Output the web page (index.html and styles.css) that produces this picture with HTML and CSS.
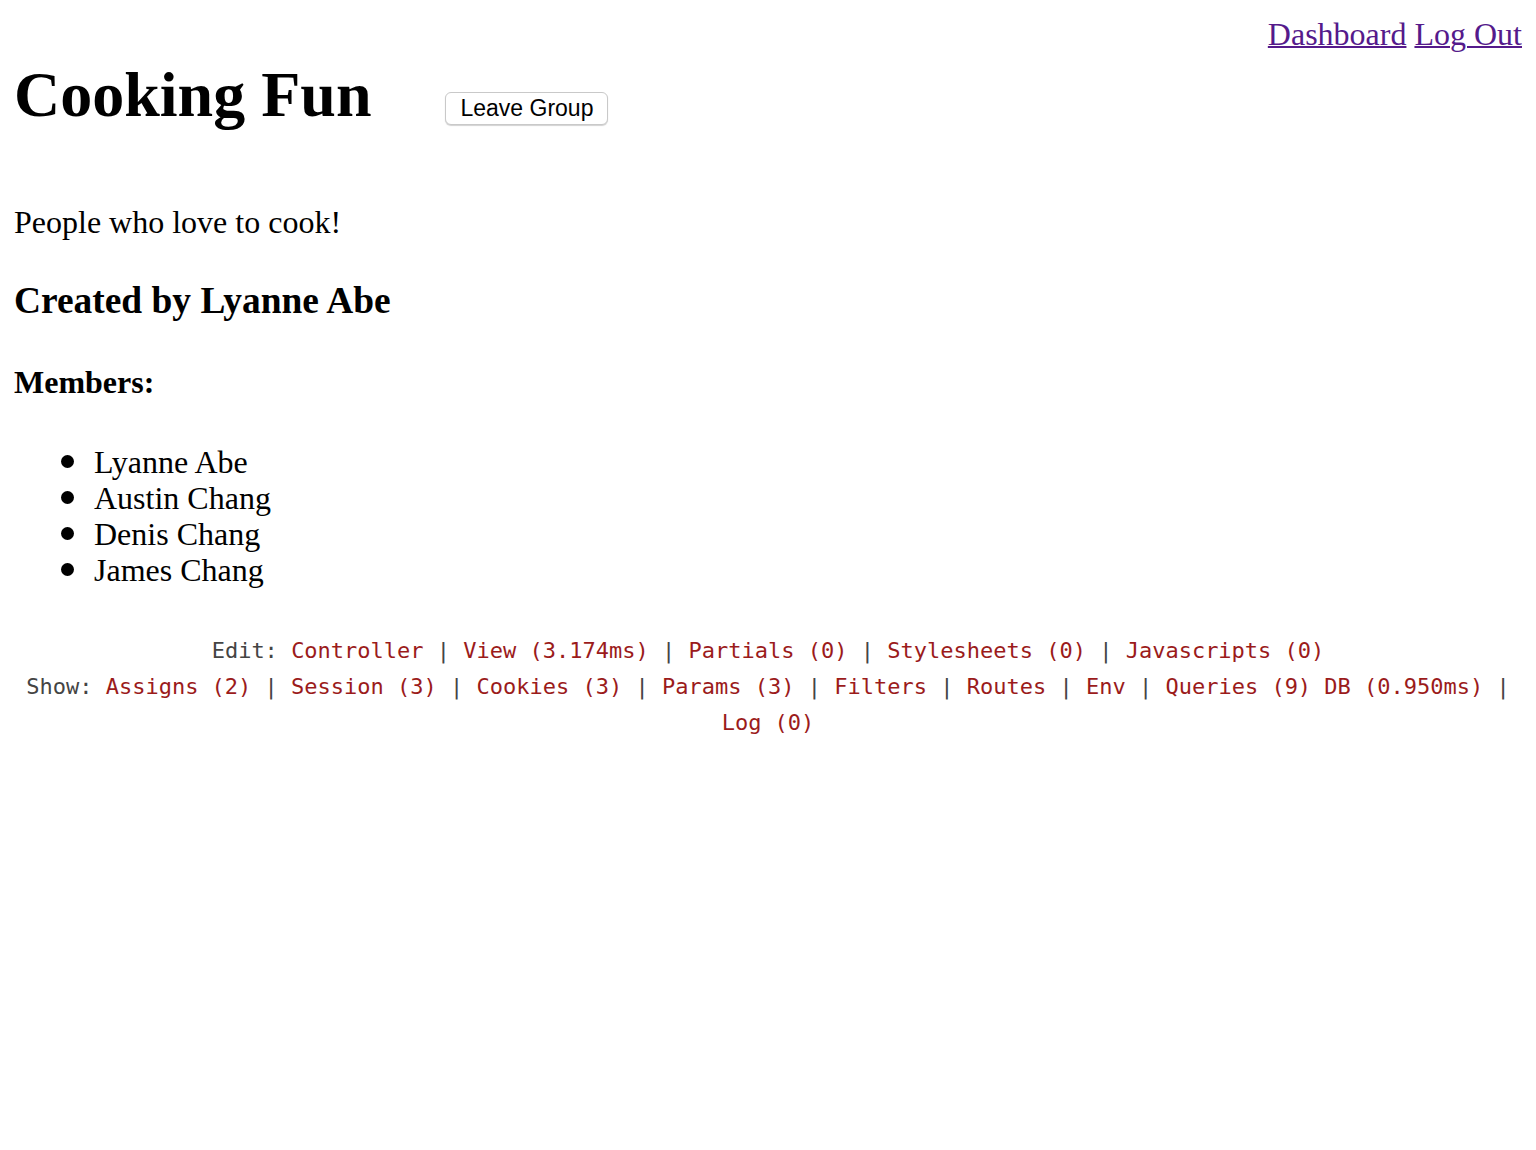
FILE: index.html
```html
<!DOCTYPE html>
<html lang="en">
<head>
<meta charset="utf-8">
<title>Cooking Fun</title>
<link rel="stylesheet" href="styles.css">
</head>
<body>
<nav class="top-nav"><a href="#">Dashboard</a> <a href="#">Log Out</a></nav>
<header class="group-header">
  <h1 class="group-title">Cooking Fun</h1>
  <button class="leave-btn" type="button">Leave Group</button>
</header>
<p class="group-desc">People who love to cook!</p>
<h3 class="creator">Created by Lyanne Abe</h3>
<h4 class="members-title">Members:</h4>
<ul class="members">
  <li>Lyanne Abe</li>
  <li>Austin Chang</li>
  <li>Denis Chang</li>
  <li>James Chang</li>
</ul>
<div class="debug">
  Edit: <a href="#">Controller</a> | <a href="#">View (3.174ms)</a> | <a href="#">Partials (0)</a> | <a href="#">Stylesheets (0)</a> | <a href="#">Javascripts (0)</a><br>
  Show: <a href="#">Assigns (2)</a> | <a href="#">Session (3)</a> | <a href="#">Cookies (3)</a> | <a href="#">Params (3)</a> | <a href="#">Filters</a> | <a href="#">Routes</a> | <a href="#">Env</a> | <a href="#">Queries (9) DB (0.950ms)</a> | <a href="#">Log (0)</a>
</div>
</body>
</html>
```

FILE: styles.css
```css
html, body {
  background: #ffffff;
}
body {
  margin: 16px 14px;
  font-family: "Liberation Serif", "Times New Roman", serif;
  font-size: 32px;
  color: #000;
}
.top-nav {
  float: right;
}
.top-nav a {
  color: #551a8b;
  text-decoration: underline;
  text-decoration-thickness: 2px;
}
.group-header {
  display: flex;
  align-items: baseline;
  gap: 74px;
}
.group-title {
  font-size: 64px;
  font-weight: bold;
  margin: 41.6px 0 40.8px;
}
.leave-btn {
  font-family: "Liberation Sans", Arial, sans-serif;
  font-size: 23px;
  color: #000;
  background: #fff;
  border: 1px solid #c9c9c9;
  border-radius: 6px;
  box-shadow: 0 1px 1px rgba(0,0,0,0.18);
  height: 33px;
  padding: 0 14px;
  box-sizing: border-box;
  line-height: 1;
}
.group-desc {
  margin: 32px 0;
}
.creator {
  font-size: 37.44px;
  margin: 37.44px 0;
}
.members-title {
  font-size: 32px;
  margin: 42.56px 0;
}
.members {
  margin: 32px 0;
  padding-left: 80px;
  list-style: none;
}
.members li {
  line-height: 36px;
}
.members li::before {
  content: "";
  display: inline-block;
  width: 13px;
  height: 13px;
  border-radius: 50%;
  background: #000;
  margin-left: -33px;
  margin-right: 20px;
  vertical-align: 4.5px;
}
.debug {
  font-family: "DejaVu Sans Mono", "Liberation Mono", monospace;
  font-size: 22px;
  line-height: 36px;
  margin: 45px 0 22px;
  text-align: center;
  color: #444;
}
.debug a {
  color: #9b1b1b;
  text-decoration: none;
}
```
